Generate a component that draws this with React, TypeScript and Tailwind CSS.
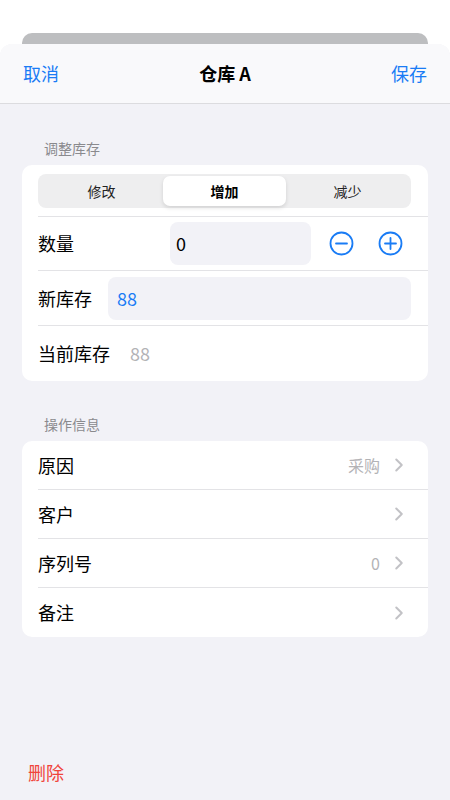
import { ChevronRight } from "lucide-react";

const font = { fontFamily: '"Noto Sans CJK SC", "Noto Sans", sans-serif' };

function CircleIcon({ plus }: { plus?: boolean }) {
  return (
    <svg width="25" height="25" viewBox="0 0 25 25" fill="none" stroke="#1a7cf5" strokeWidth="1.8" strokeLinecap="round">
      <circle cx="12.5" cy="12.5" r="11" />
      <line x1="7" y1="12.5" x2="18" y2="12.5" />
      {plus && <line x1="12.5" y1="7" x2="12.5" y2="18" />}
    </svg>
  );
}

function InfoRow({ label, value, last }: { label: string; value?: string; last?: boolean }) {
  return (
    <div className={`flex items-center h-[49px] ml-4 pr-[18px] ${last ? "" : "border-b border-[#e3e3e6]"}`}>
      <span className="text-[18px] text-black flex-1">{label}</span>
      {value && <span className="text-[16px] text-[#b3b3b6] mr-[8px]">{value}</span>}
      <ChevronRight className="w-[22px] h-[22px] text-[#c2c2c6]" strokeWidth={2.2} />
    </div>
  );
}

export default function App() {
  const segs = ["修改", "增加", "减少"];
  return (
    <div style={font} className="min-h-screen flex flex-col bg-white">
      <div className="h-[33px]" />
      <div className="mx-[22px] h-[11px] rounded-t-[10px] bg-[#bdbec0]" />
      <div className="flex-1 flex flex-col bg-[#f2f2f7] rounded-t-[12px] overflow-hidden">
        <div className="h-[60px] flex items-center px-[23px] bg-[#f9f9fb] border-b border-[#dcdcdf]">
          <span className="text-[18px] text-[#1a7cf5] flex-1">取消</span>
          <span className="text-[18px] font-bold text-black">仓库 A</span>
          <span className="text-[18px] text-[#1a7cf5] flex-1 text-right">保存</span>
        </div>

        <div className="px-[22px]">
          <div className="pt-[34px] pb-[6px] pl-[22px] text-[14px] text-[#8a8a8e]">调整库存</div>
          <div className="bg-white rounded-[10px] pt-[9px]">
            <div className="mx-4 mr-[17px] h-[34px] rounded-[8px] bg-[#eeeeef] flex items-center px-[2px]">
              {segs.map((s) => (
                <div
                  key={s}
                  className={`flex-1 h-[30px] flex items-center justify-center text-[14px] rounded-[7px] ${
                    s === "增加" ? "bg-white font-bold text-black shadow-[0_2px_4px_rgba(0,0,0,0.12)]" : "text-[#222]"
                  }`}
                >
                  {s}
                </div>
              ))}
            </div>
            <div className="ml-4 border-b border-[#e3e3e6] mt-[8px]" />
            <div className="ml-4 h-[54px] flex items-center border-b border-[#e3e3e6]">
              <span className="text-[18px] text-black w-[132px]">数量</span>
              <div className="w-[141px] h-[43px] rounded-[8px] bg-[#f2f2f7] flex items-center px-[6px] text-[18px] text-black">0</div>
              <div className="flex items-center gap-[24px] ml-[18px]">
                <CircleIcon />
                <CircleIcon plus />
              </div>
            </div>
            <div className="ml-4 h-[55px] flex items-center border-b border-[#e3e3e6]">
              <span className="text-[18px] text-black w-[70px]">新库存</span>
              <div className="flex-1 mr-[17px] h-[43px] rounded-[8px] bg-[#f2f2f7] flex items-center px-[9px] text-[18px] text-[#1a7cf5]">88</div>
            </div>
            <div className="ml-4 h-[55px] flex items-center">
              <span className="text-[18px] text-black w-[92px]">当前库存</span>
              <span className="text-[18px] text-[#b3b3b6]">88</span>
            </div>
          </div>

          <div className="pt-[33px] pb-[6px] pl-[22px] text-[14px] text-[#8a8a8e]">操作信息</div>
          <div className="bg-white rounded-[10px]">
            <InfoRow label="原因" value="采购" />
            <InfoRow label="客户" />
            <InfoRow label="序列号" value="0" />
            <InfoRow label="备注" last />
          </div>
        </div>

        <div className="mt-auto pl-[28px] pb-[14px] text-[18px] text-[#f0443a]">删除</div>
      </div>
    </div>
  );
}
